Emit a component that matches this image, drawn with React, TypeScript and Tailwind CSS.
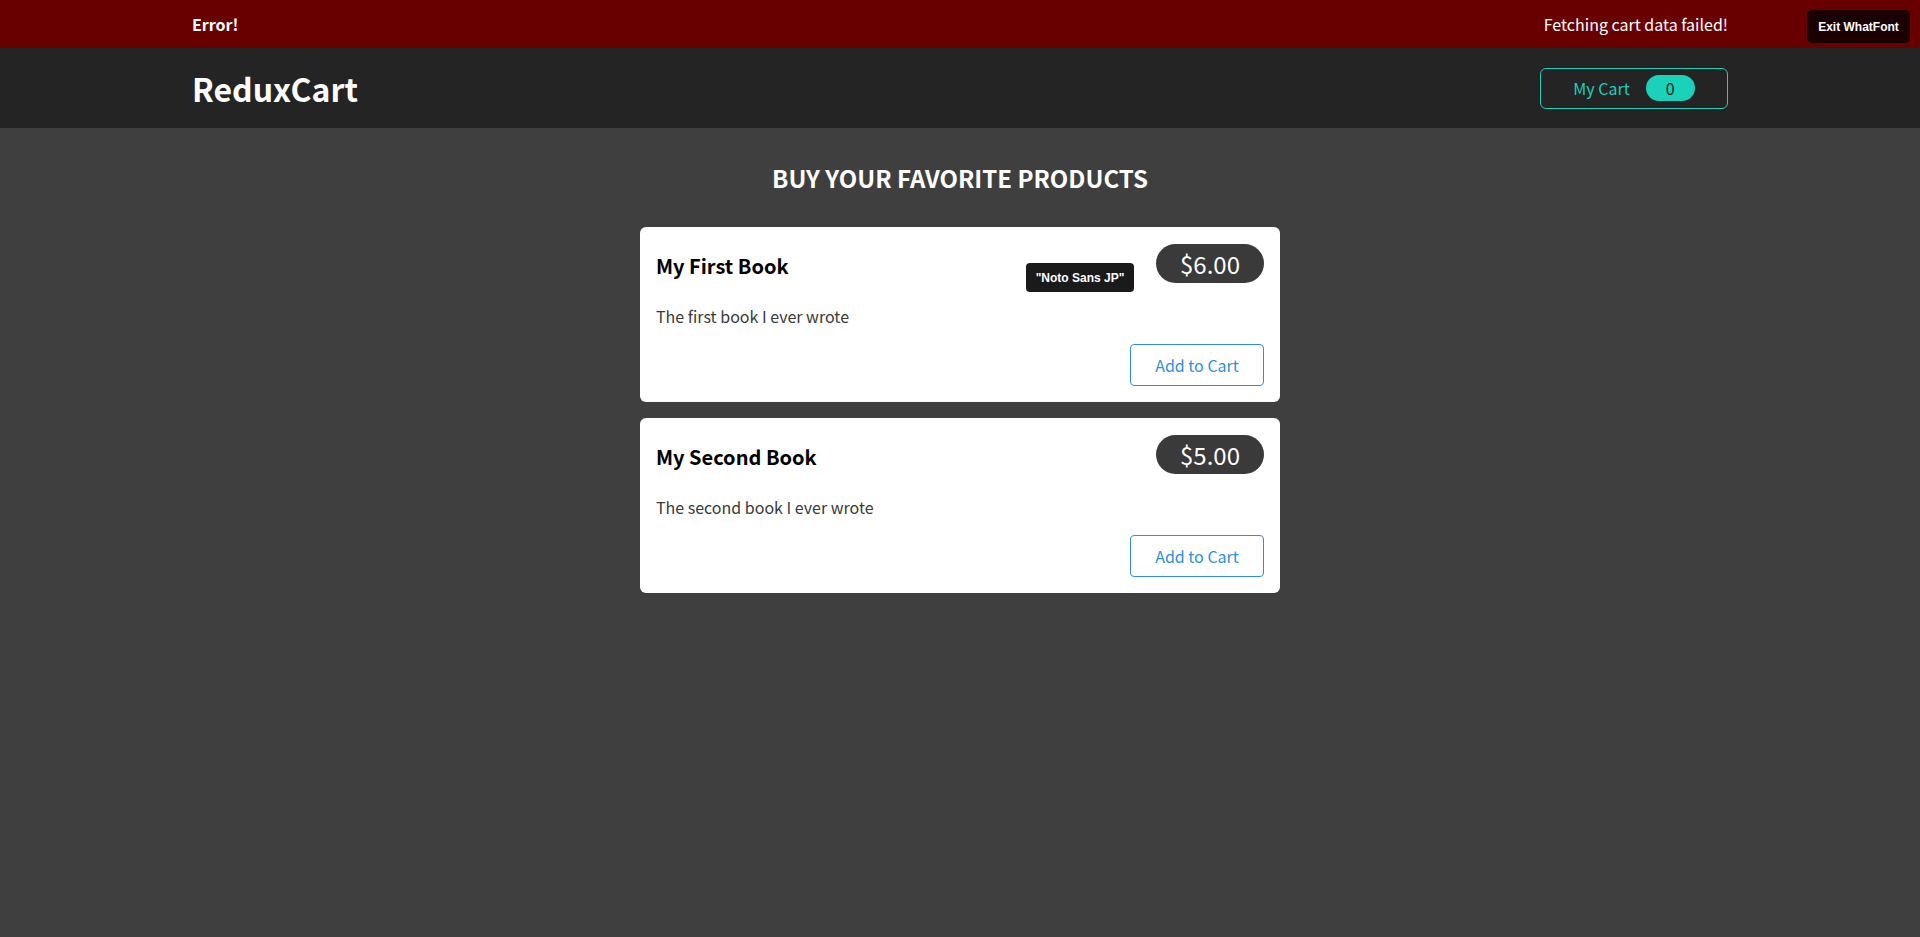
const products = [
  { id: "p1", title: "My First Book", price: 6, description: "The first book I ever wrote" },
  { id: "p2", title: "My Second Book", price: 5, description: "The second book I ever wrote" },
];

function ProductItem({ title, price, description, tip }: { title: string; price: number; description: string; tip?: boolean }) {
  return (
    <li className="relative my-4 rounded-[6px] bg-white p-4">
      <header className="flex items-center justify-between">
        <h3 className="my-2 text-[20px] font-bold text-black leading-[normal]">{title}</h3>
        <div className="-mt-1 rounded-[30px] bg-[#3a3a3a] px-6 py-[2.4px] text-[24px] text-white leading-[normal]">
          ${price.toFixed(2)}
        </div>
      </header>
      <p className="my-4 text-[16px] text-[#3a3a3a] leading-[normal]">{description}</p>
      <div className="flex justify-end">
        <button className="h-[42px] w-[134px] rounded-[4px] border border-[#2f8fdd] bg-transparent text-[16px] text-[#2f8fdd] leading-[normal]">
          Add to Cart
        </button>
      </div>
      {tip && (
        <div className="absolute left-[386px] top-[36px] flex h-[29px] w-[108px] items-center justify-center rounded-[4px] bg-[#1a1a1a] text-[12px] font-bold text-white font-['Liberation_Sans',sans-serif]">
          "Noto Sans JP"
        </div>
      )}
    </li>
  );
}

export default function App() {
  return (
    <div className="relative min-h-[937px] bg-[#3f3f3f] font-['Noto_Sans_CJK_JP',sans-serif]">
      {/* Notification */}
      <section className="flex h-12 items-center justify-between bg-[#690000] px-[10%] text-white">
        <h2 className="text-[16px] font-bold leading-[normal]">Error!</h2>
        <p className="text-[16px] leading-[normal]">Fetching cart data failed!</p>
      </section>

      {/* Header */}
      <header className="flex h-20 items-center justify-between bg-[#252424] px-[10%]">
        <h1 className="text-[32px] font-bold text-white leading-[normal]">ReduxCart</h1>
        <button className="flex h-[41px] w-[188px] items-center justify-center gap-4 rounded-[6px] border border-[#1ad1b9] bg-transparent text-[16px] text-[#1ad1b9] leading-[normal]">
          <span>My Cart</span>
          <span className="flex h-[26px] w-[49px] items-center justify-center rounded-full bg-[#1ad1b9] text-[#1d1d1d]">0</span>
        </button>
      </header>

      {/* Products */}
      <section className="mx-auto w-[640px] pt-8">
        <h2 className="mb-8 text-center text-[24px] font-bold uppercase text-white leading-[normal]">
          Buy your favorite products
        </h2>
        <ul>
          {products.map((p, i) => (
            <ProductItem key={p.id} title={p.title} price={p.price} description={p.description} tip={i === 0} />
          ))}
        </ul>
      </section>

      {/* WhatFont overlay */}
      <button className="absolute right-[10px] top-[10px] flex h-[33px] w-[103px] items-center justify-center rounded-[5px] bg-[#1a0000] text-[12px] font-bold text-white font-['Liberation_Sans',sans-serif]">
        Exit WhatFont
      </button>
    </div>
  );
}
